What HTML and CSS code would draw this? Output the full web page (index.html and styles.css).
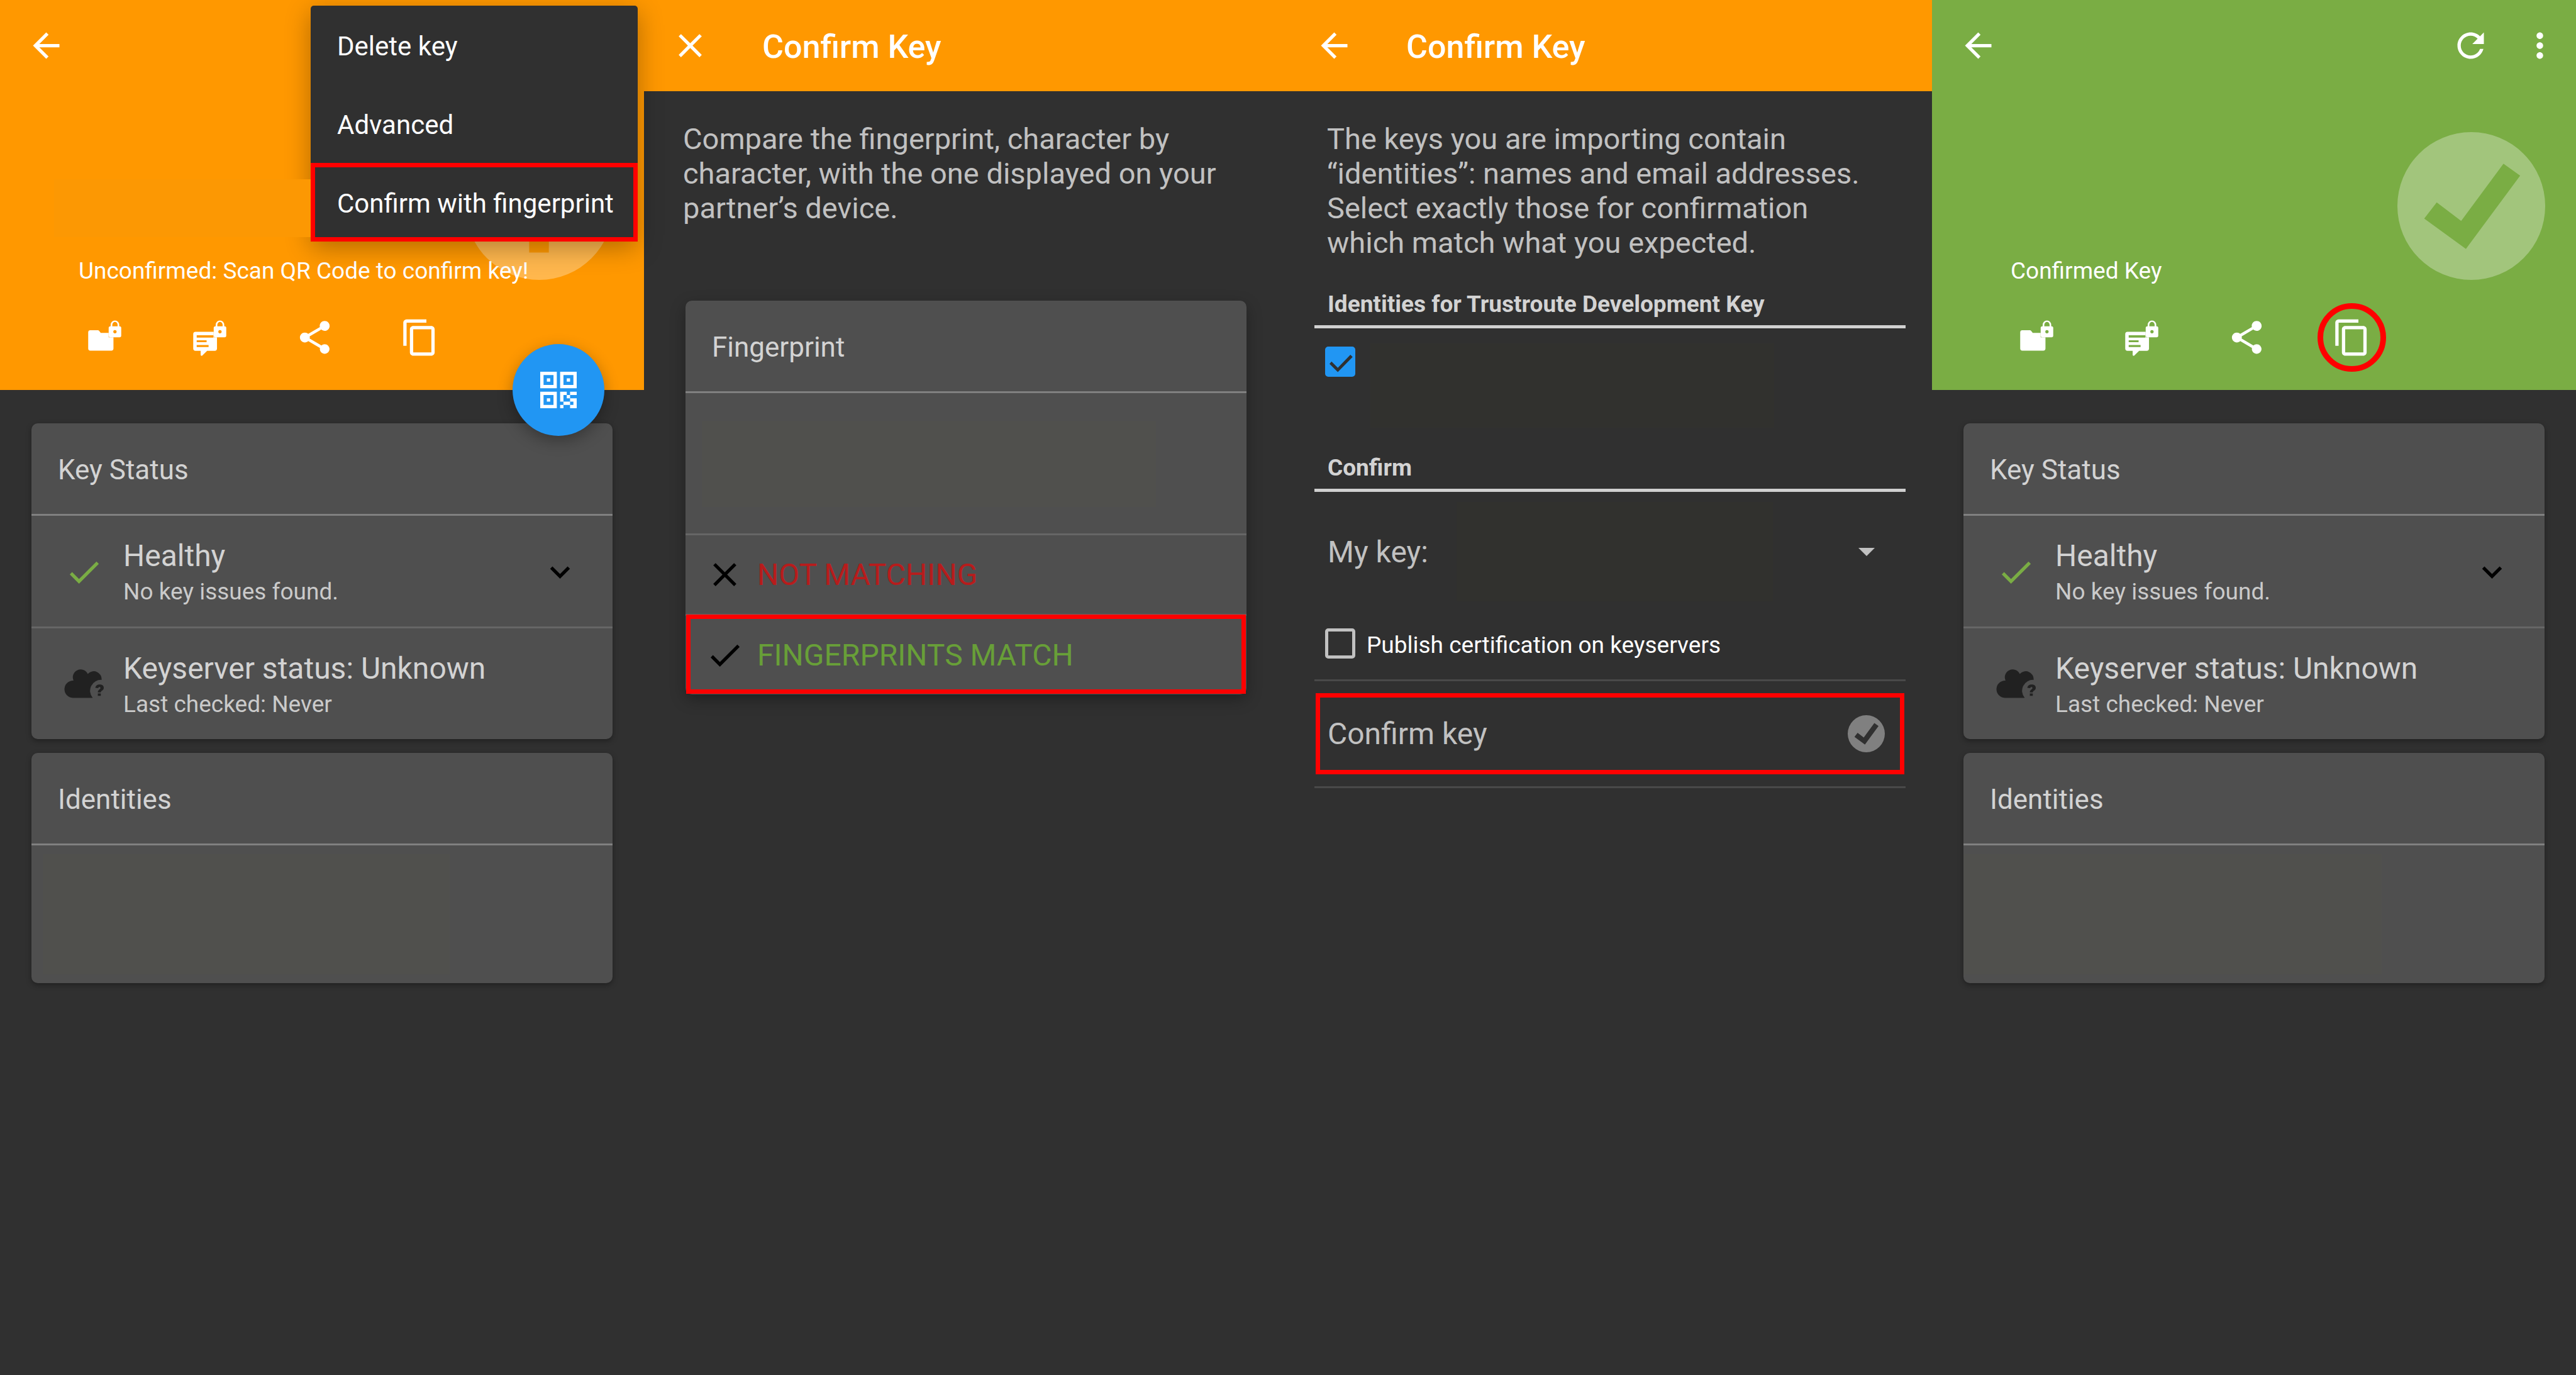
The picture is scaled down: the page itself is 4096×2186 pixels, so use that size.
FILE: index.html
```html
<!DOCTYPE html>
<html lang="en">
<head>
<meta charset="utf-8">
<title>Confirm Key</title>
<link rel="stylesheet" href="styles.css">
</head>
<body>
<svg class="sprite" aria-hidden="true">
  <symbol id="back" viewBox="0 0 24 24"><path d="M20 11H7.83l5.59-5.59L12 4l-8 8 8 8 1.41-1.41L7.83 13H20v-2z"/></symbol>
  <symbol id="close" viewBox="0 0 24 24"><path d="M19 6.41L17.59 5 12 10.59 6.41 5 5 6.41 10.59 12 5 17.59 6.41 19 12 13.41 17.59 19 19 17.59 13.41 12z"/></symbol>
  <symbol id="check" viewBox="0 0 24 24"><path d="M9 16.17L4.83 12l-1.42 1.41L9 19 21 7l-1.41-1.41z"/></symbol>
  <symbol id="expand" viewBox="0 0 24 24"><path d="M16.59 8.59L12 13.17 7.41 8.59 6 10l6 6 6-6z"/></symbol>
  <symbol id="refresh" viewBox="0 0 24 24"><path d="M17.65 6.35C16.2 4.9 14.21 4 12 4c-4.42 0-7.99 3.58-7.99 8s3.57 8 7.99 8c3.73 0 6.84-2.55 7.73-6h-2.08c-.82 2.33-3.04 4-5.65 4-3.31 0-6-2.69-6-6s2.69-6 6-6c1.66 0 3.14.69 4.22 1.78L13 11h7V4l-2.35 2.35z"/></symbol>
  <symbol id="more" viewBox="0 0 24 24"><path d="M12 8c1.1 0 2-.9 2-2s-.9-2-2-2-2 .9-2 2 .9 2 2 2zm0 2c-1.1 0-2 .9-2 2s.9 2 2 2 2-.9 2-2-.9-2-2-2zm0 6c-1.1 0-2 .9-2 2s.9 2 2 2 2-.9 2-2-.9-2-2-2z"/></symbol>
  <symbol id="share" viewBox="0 0 24 24"><path d="M18 16.08c-.76 0-1.44.3-1.96.77L8.91 12.7c.05-.23.09-.46.09-.7s-.04-.47-.09-.7l7.05-4.11c.54.5 1.25.81 2.04.81 1.66 0 3-1.34 3-3s-1.34-3-3-3-3 1.34-3 3c0 .24.04.47.09.7L8.04 9.81C7.5 9.31 6.79 9 6 9c-1.66 0-3 1.34-3 3s1.34 3 3 3c.79 0 1.5-.31 2.04-.81l7.12 4.16c-.05.21-.08.43-.08.65 0 1.61 1.31 2.92 2.92 2.92s2.92-1.31 2.92-2.92-1.31-2.92-2.92-2.92z"/></symbol>
  <symbol id="copy" viewBox="0 0 24 24"><path d="M16 1H4c-1.1 0-2 .9-2 2v14h2V3h12V1zm3 4H8c-1.1 0-2 .9-2 2v14c0 1.1.9 2 2 2h11c1.1 0 2-.9 2-2V7c0-1.1-.9-2-2-2zm0 16H8V7h11v14z"/></symbol>
  <symbol id="lock" viewBox="0 0 24 24"><path fill-rule="evenodd" d="M15.6 5.2V4.4a2.6 2.7 0 0 1 5.2 0v.8h.2a1 1 0 0 1 1 1v4.7a1 1 0 0 1-1 1h-5.6a1 1 0 0 1-1-1V6.200a1 1 0 0 1 1-1zm1 0h3.200V4.400a1.600 1.800 0 0 0-3.200 0zm1.600 2.300a1 1 0 1 0 0 2 1 1 0 0 0 0-2z"/></symbol>
  <symbol id="folder-lock" viewBox="0 0 24 24"><path d="M3.300 7.600h4.400c.4 0 .7.100.9.400l1 1.200h4.800v2.700h2.900v6.800a1.300 1.300 0 0 1-1.300 1.300H3.300A1.300 1.300 0 0 1 2 18.700V8.900a1.300 1.300 0 0 1 1.300-1.300z"/><use href="#lock"/></symbol>
  <symbol id="message-lock" viewBox="0 0 24 24"><path fill-rule="evenodd" d="M3.400 8.600h11v3.300h2v6.800a1.400 1.400 0 0 1-1.400 1.400h-4.600l-2.800 2.800c-.4.400-1.100.2-1.100-.4v-2.400H3.400A1.400 1.400 0 0 1 2 18.700V10a1.400 1.400 0 0 1 1.400-1.400zm.7 2.100v1.400h10.100v-1.400zm0 3v1.200h6v-1.200zm0 2.900v1.200h7.200v-1.200z"/><use href="#lock"/></symbol>
  <symbol id="cloud-unknown" viewBox="0 0 24 24"><path d="M22.700 9.100A6.600 6.600 0 0 0 17.300 20H5.200A5.200 5.200 0 0 1 5.700 9.500 4.700 4.700 0 0 1 14.300 5.500 4.800 4.800 0 0 1 22.700 9.100z"/><path d="M18.900 13.900c.2-1.300 1.200-2 2.600-2 1.500 0 2.500.7 2.500 2 0 1.600-1.800 1.700-1.800 2.800h-1.800c0-1.700 1.600-1.800 1.600-2.700 0-.8-1.200-.8-1.400.1zm1.500 3.400h1.800v1.500h-1.800z"/></symbol>
  <symbol id="seal-check" viewBox="0 0 248 248"><path fill-rule="evenodd" d="M124 0a124 124 0 1 1 0 248 124 124 0 0 1 0-248zM178 53L107 149 66 118 45 145 115 196 206 73z"/></symbol>
  <symbol id="seal-unknown" viewBox="0 0 248 248"><path fill-rule="evenodd" d="M124 0a124 124 0 1 1 0 248 124 124 0 0 1 0-248zM107 46v95h33V46zM107 168v34h33v-34z"/></symbol>
  <symbol id="qr" viewBox="0 0 11 11"><path fill-rule="evenodd" d="M0 0h5v5H0zM1 1v3h3V1zM2 2h1v1H2zM6 0h5v5H6zM7 1v3h3V1zM8 2h1v1H8zM0 6h5v5H0zM1 7v3h3V7zM2 8h1v1H2z"/><path d="M6 6h2v1H7v2H6zM9 6h2v1H9v1H8V7h1zM9 8h2v3H9v-1H7V9h2v1h1V9H9zM6 10h1v1H6z"/></symbol>
</svg>

<main class="screens">
  <section class="screen">
    <header class="hero hero-orange">
      <nav class="toolbar">
        <button class="icon-button" aria-label="Back"><svg class="icon"><use href="#back"/></svg></button>
      </nav>
      <svg class="seal" aria-hidden="true"><use href="#seal-unknown"/></svg>
      <div class="key-name key-name-masked"></div>
      <p class="key-state">Unconfirmed: Scan QR Code to confirm key!</p>
      <div class="actions">
        <button class="action" aria-label="Encrypt files"><svg class="icon"><use href="#folder-lock"/></svg></button>
        <button class="action" aria-label="Encrypt text"><svg class="icon"><use href="#message-lock"/></svg></button>
        <button class="action" aria-label="Share"><svg class="icon"><use href="#share"/></svg></button>
        <button class="action" aria-label="Copy"><svg class="icon"><use href="#copy"/></svg></button>
      </div>
      <div class="menu">
        <button class="menu-item">Delete key</button>
        <button class="menu-item">Advanced</button>
        <button class="menu-item marked">Confirm with fingerprint</button>
      </div>
      <button class="fab" aria-label="Scan QR code"><svg class="qr"><use href="#qr"/></svg></button>
    </header>
    <div class="cards">
      <article class="card">
        <h2 class="card-title">Key Status</h2>
        <div class="status">
          <svg class="icon icon-ok"><use href="#check"/></svg>
          <div class="status-text"><h3>Healthy</h3><p>No key issues found.</p></div>
          <button class="icon-button dark" aria-label="Show details"><svg class="icon"><use href="#expand"/></svg></button>
        </div>
        <div class="status ruled">
          <svg class="icon icon-cloud"><use href="#cloud-unknown"/></svg>
          <div class="status-text"><h3>Keyserver status: Unknown</h3><p>Last checked: Never</p></div>
        </div>
      </article>
      <article class="card">
        <h2 class="card-title">Identities</h2>
        <div class="identity"><div class="identity-mask inset"></div></div>
      </article>
    </div>
  </section>

  <section class="screen">
    <header class="toolbar toolbar-orange">
      <button class="icon-button" aria-label="Close"><svg class="icon"><use href="#close"/></svg></button>
      <h1 class="title">Confirm Key</h1>
    </header>
    <p class="intro">Compare the fingerprint, character by character, with the one displayed on your partner’s device.</p>
    <article class="card fingerprint">
      <h2 class="card-title">Fingerprint</h2>
      <div class="fingerprint-value"><div class="fingerprint-mask"></div></div>
      <button class="choice choice-no ruled"><svg class="icon"><use href="#close"/></svg>NOT MATCHING</button>
      <button class="choice choice-yes ruled"><svg class="icon"><use href="#check"/></svg>FINGERPRINTS MATCH</button>
    </article>
  </section>

  <section class="screen">
    <header class="toolbar toolbar-orange">
      <button class="icon-button" aria-label="Back"><svg class="icon"><use href="#back"/></svg></button>
      <h1 class="title">Confirm Key</h1>
    </header>
    <p class="intro">The keys you are importing contain “identities”: names and email addresses. Select exactly those for confirmation which match what you expected.</p>
    <form class="form">
      <h2 class="section-title">Identities for Trustroute Development Key</h2>
      <div class="identity-row">
        <input class="tick" type="checkbox" id="identity" checked aria-label="Identity">
        <label class="identity-label" for="identity"></label>
      </div>
      <h2 class="section-title">Confirm</h2>
      <div class="key-row">
        <label for="my-key">My key:</label>
        <select class="key-select" id="my-key"><option></option></select>
        <svg class="caret" viewBox="0 0 26 13" aria-hidden="true"><path d="M0 0h26L13 13z"/></svg>
      </div>
      <div class="publish-row">
        <input class="tick" type="checkbox" id="publish">
        <label class="publish-label" for="publish">Publish certification on keyservers</label>
      </div>
      <div class="submit-row">
        <button class="submit" type="button">Confirm key<svg class="submit-seal"><use href="#seal-check"/></svg></button>
      </div>
    </form>
  </section>

  <section class="screen">
    <header class="hero hero-green">
      <nav class="toolbar">
        <button class="icon-button" aria-label="Back"><svg class="icon"><use href="#back"/></svg></button>
        <button class="icon-button push" aria-label="Refresh"><svg class="icon"><use href="#refresh"/></svg></button>
        <button class="icon-button" aria-label="More options"><svg class="icon"><use href="#more"/></svg></button>
      </nav>
      <svg class="seal" aria-hidden="true"><use href="#seal-check"/></svg>
      <div class="key-name"></div>
      <p class="key-state">Confirmed Key</p>
      <div class="actions">
        <button class="action" aria-label="Encrypt files"><svg class="icon"><use href="#folder-lock"/></svg></button>
        <button class="action" aria-label="Encrypt text"><svg class="icon"><use href="#message-lock"/></svg></button>
        <button class="action" aria-label="Share"><svg class="icon"><use href="#share"/></svg></button>
        <button class="action ringed" aria-label="Copy"><svg class="icon"><use href="#copy"/></svg></button>
      </div>
    </header>
    <div class="cards">
      <article class="card">
        <h2 class="card-title">Key Status</h2>
        <div class="status">
          <svg class="icon icon-ok"><use href="#check"/></svg>
          <div class="status-text"><h3>Healthy</h3><p>No key issues found.</p></div>
          <button class="icon-button dark" aria-label="Show details"><svg class="icon"><use href="#expand"/></svg></button>
        </div>
        <div class="status ruled">
          <svg class="icon icon-cloud"><use href="#cloud-unknown"/></svg>
          <div class="status-text"><h3>Keyserver status: Unknown</h3><p>Last checked: Never</p></div>
        </div>
      </article>
      <article class="card">
        <h2 class="card-title">Identities</h2>
        <div class="identity"><div class="identity-mask"></div></div>
      </article>
    </div>
  </section>
</main>
</body>
</html>
```
FILE: styles.css
```css
:root {
  --orange: #ff9800;
  --green: #7aad44;
  --blue: #2196f3;
  --page: #303030;
  --card: #4f4f4f;
  --masked: #50504d;
  --text: #c1c1c1;
  --text-bright: #d3d3d3;
  --mark: #ff0000;
}

* { box-sizing: border-box; }

body {
  margin: 0;
  background: var(--page);
  color: var(--text);
  font: 48px/55px Roboto, sans-serif;
}

h1, h2, h3, p { margin: 0; font-weight: 400; }

button {
  padding: 0;
  border: 0;
  background: none;
  color: inherit;
  font: inherit;
  text-align: left;
}

.sprite { position: absolute; width: 0; height: 0; }

.icon {
  display: block;
  flex: none;
  width: 63px;
  height: 63px;
  fill: currentColor;
}

.screens {
  display: grid;
  grid-template-columns: repeat(4, 1fr);
  min-height: 100vh;
}

.screen { min-width: 0; }

/* Toolbars and key header */

.toolbar {
  display: flex;
  align-items: center;
  gap: 47px;
  height: 145px;
  padding: 0 26px 0 42px;
  color: #fff;
}

.toolbar-orange {
  gap: 83px;
  background: var(--orange);
}

.title {
  padding-top: 4px;
  font-size: 52px;
  line-height: 61px;
  font-weight: 500;
}

.push { margin-left: auto; }
.dark { color: #000; }

.hero {
  position: relative;
  padding-bottom: 21px;
  color: #fff;
}

.hero-orange { background: var(--orange); }
.hero-green { background: var(--green); }

.seal {
  position: absolute;
  top: 210px;
  right: 49px;
  width: 235px;
  height: 235px;
  fill: #fff;
  opacity: 0.3;
}

.key-name {
  position: relative;
  z-index: 3;
  width: 408px;
  height: 92px;
  margin: 140px 0 32px 86px;
}

.key-name-masked { background: #fc9803; }

.key-state {
  position: relative;
  margin: 0 0 22px 125px;
  font-size: 37px;
  line-height: 43px;
}

.actions {
  display: flex;
  padding-left: 83px;
}

.action {
  position: relative;
  display: grid;
  place-items: center;
  width: 167px;
  height: 125px;
}

.ringed::after {
  content: "";
  position: absolute;
  inset: 8px 29px;
  border: 9px solid var(--mark);
  border-radius: 50%;
}

.menu {
  position: absolute;
  z-index: 2;
  top: 9px;
  right: 10px;
  width: 520px;
  border-radius: 5px;
  background: var(--page);
  box-shadow: 0 10px 40px rgba(0, 0, 0, 0.3);
}

.menu-item {
  display: block;
  width: 100%;
  height: 125px;
  padding: 4px 0 0 42px;
  font-size: 42px;
  line-height: 49px;
  white-space: nowrap;
}

.marked {
  outline: 7px solid var(--mark);
  outline-offset: -7px;
}

.fab {
  position: absolute;
  right: 63px;
  bottom: -73px;
  display: grid;
  place-items: center;
  width: 146px;
  height: 146px;
  border-radius: 50%;
  background: var(--blue);
  box-shadow: 0 8px 24px rgba(0, 0, 0, 0.3);
}

.qr {
  width: 58px;
  height: 58px;
  fill: #fff;
}

/* Cards */

.cards {
  display: grid;
  gap: 22px;
  padding: 53px 50px;
}

.card {
  border-radius: 10px;
  background: var(--card);
  box-shadow: 0 3px 8px rgba(0, 0, 0, 0.35);
}

.card-title {
  padding: 47px 42px 42px;
  border-bottom: 3px solid #808080;
  color: var(--text-bright);
  font-size: 44px;
}

.ruled { border-top: 3px solid #666; }

.status {
  display: flex;
  align-items: center;
  padding: 36px 52px 34px;
}

.status-text {
  flex: 1;
  margin-left: 31px;
}

.status-text h3 {
  color: var(--text-bright);
  font-size: 48px;
}

.status-text p {
  padding-top: 8px;
  color: #cacaca;
  font-size: 37px;
  line-height: 43px;
}

.icon-ok { color: var(--green); }
.icon-cloud { color: #212121; }

.identity {
  height: 219px;
  padding: 14px 0;
}

.identity-mask {
  width: 72%;
  height: 191px;
  background: var(--masked);
}

.inset {
  width: 70%;
  margin-left: 18px;
}

.fingerprint {
  margin: 120px 66px 0;
  box-shadow: 0 8px 24px rgba(0, 0, 0, 0.3);
}

.fingerprint-value { padding: 44px 26px 42px; }

.fingerprint-mask {
  width: 86%;
  height: 137px;
  background: var(--masked);
}

.choice {
  display: flex;
  align-items: center;
  gap: 20px;
  width: 100%;
  height: 128px;
  padding: 0 31px;
}

.choice .icon { color: #000; }
.choice-no { color: #b71c1c; }

.choice-yes {
  color: #689f38;
  outline: 7px solid var(--mark);
  outline-offset: -8px;
}

/* Confirmation form */

.intro {
  padding: 48px 62px 0;
  font-size: 47px;
}

.form { padding: 49px 42px; }

.section-title {
  padding: 0 21px 12px;
  border-bottom: 5px solid #d0d0d0;
  color: var(--text-bright);
  font-size: 37px;
  line-height: 43px;
  font-weight: 700;
}

.tick {
  flex: none;
  display: grid;
  place-items: center;
  width: 48px;
  height: 48px;
  margin: 0;
  border: 5px solid #c1c1c1;
  border-radius: 5px;
  appearance: none;
}

.tick:checked {
  border-color: var(--blue);
  background: var(--blue);
}

.tick:checked::before {
  content: "";
  width: 40px;
  height: 40px;
  background: var(--page);
  clip-path: polygon(38% 72%, 13% 47%, 5% 56%, 38% 89%, 97% 29%, 88% 20%);
}

.identity-row {
  display: flex;
  gap: 24px;
  padding: 24px 17px 42px;
}

.identity-row .tick { margin-top: 5px; }

.identity-label {
  width: 642px;
  height: 134px;
  background: #31312e;
}

.key-row {
  display: flex;
  align-items: center;
  gap: 45px;
  padding: 16px 49px 0 21px;
}

.key-select {
  flex: 1;
  min-width: 0;
  height: 158px;
  border: 0;
  background: linear-gradient(#31312e, #31312e) 0 0 / 503px 100% no-repeat;
  color: inherit;
  font: inherit;
  appearance: none;
}

.caret {
  width: 26px;
  height: 13px;
  fill: var(--text);
}

.publish-row {
  display: flex;
  align-items: center;
  gap: 18px;
  padding: 43px 17px 33px;
  color: #fff;
  font-size: 37px;
  line-height: 43px;
}

.publish-label { padding-top: 4px; }

.submit-row {
  padding: 19px 2px;
  border: solid #494949;
  border-width: 3px 0;
}

.submit {
  display: flex;
  align-items: center;
  justify-content: space-between;
  width: 100%;
  height: 129px;
  padding: 0 24px 0 12px;
  border: 7px solid var(--mark);
}

.submit-seal {
  width: 59px;
  height: 59px;
  fill: #808080;
}
```
